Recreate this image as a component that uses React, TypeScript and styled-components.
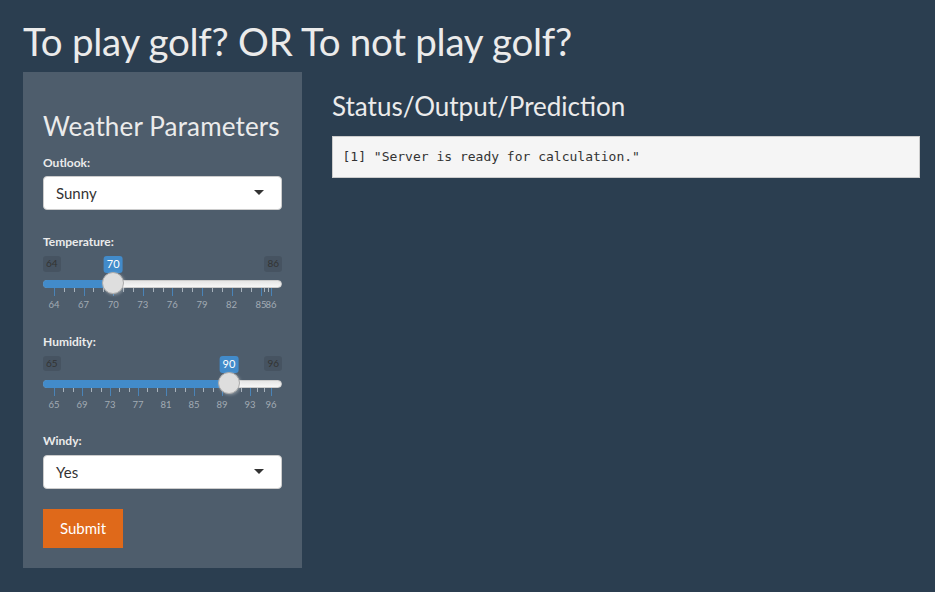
import React from "react";
import styled, { createGlobalStyle } from "styled-components";

const GlobalStyle = createGlobalStyle`
  html, body { margin: 0; padding: 0; }
  body {
    background: #2b3e50;
    color: #ebebeb;
    font-family: Lato, "Open Sans", "Liberation Sans", sans-serif;
    font-size: 15px;
    line-height: 1.42857143;
  }
  * { box-sizing: border-box; }
`;

const Page = styled.div`
  padding: 0 15px 20px 23px;
`;

const Title = styled.h2`
  margin: 20px 0 9px;
  font-size: 38.5px;
  font-weight: 400;
  line-height: 43px;
  letter-spacing: -0.28px;
  color: #ebebeb;
`;

const Row = styled.div`
  display: flex;
  align-items: flex-start;
  gap: 30px;
`;

const Well = styled.form`
  flex: 0 0 279px;
  width: 279px;
  padding: 19px;
  border: 1px solid transparent;
  background: #4e5d6c;
`;

const Main = styled.div`
  flex: 1 1 auto;
  min-width: 0;
`;

const SectionTitle = styled.h3`
  margin: 20px 0 10px;
  font-size: 26px;
  font-weight: 400;
  line-height: 1.1;
  letter-spacing: 0.15px;
  color: #ebebeb;
`;

const FormGroup = styled.div`
  margin-bottom: 15px;
  font-size: 15px;
  line-height: 1.42857143;
`;

const Label = styled.label`
  display: inline-block;
  max-width: 100%;
  margin-bottom: 5px;
  font-size: 12px;
  font-weight: 700;
  color: #ebebeb;
`;

const SelectControl = styled.div`
  position: relative;
`;

const SelectInput = styled.div`
  display: inline-block;
  position: relative;
  overflow: hidden;
  width: 100%;
  height: 34px;
  padding: 6px 12px;
  border: 1px solid #cccccc;
  border-radius: 4px;
  background: #ffffff;
  color: #333333;
  font-size: 15px;
  line-height: 20px;
  vertical-align: baseline;
`;

const Caret = styled.span`
  position: absolute;
  top: 50%;
  right: 17px;
  margin-top: -3px;
  width: 0;
  height: 0;
  border-style: solid;
  border-width: 5px 5px 0 5px;
  border-color: #333333 transparent transparent transparent;
`;

const Irs = styled.div`
  position: relative;
  height: 59.5px;
  user-select: none;
`;

const IrsLine = styled.span`
  position: absolute;
  top: 25px;
  left: 0;
  width: 100%;
  height: 8px;
  border: 1px solid #cccccc;
  border-radius: 8px;
  background: linear-gradient(to bottom, #dddddd -50%, #ffffff 150%);
`;

const IrsBar = styled.span`
  position: absolute;
  top: 25px;
  left: 0;
  height: 8px;
  border-radius: 8px 0 0 8px;
  background: #428bca;
`;

const IrsHandle = styled.span`
  position: absolute;
  top: 17px;
  width: 22px;
  height: 22px;
  margin-left: -11px;
  border: 1px solid #ababab;
  border-radius: 50%;
  background: #dedede;
  box-shadow: 1px 1px 3px rgba(255, 255, 255, 0.3);
`;

const IrsEdge = styled.span<{ $side: "left" | "right" }>`
  position: absolute;
  top: 1px;
  ${(p) => (p.$side === "left" ? "left: 0;" : "right: 0;")}
  padding: 1px 3px;
  border-radius: 3px;
  background: rgba(0, 0, 0, 0.1);
  color: #333333;
  font-size: 10px;
  line-height: 1.333;
`;

const IrsSingle = styled.span`
  position: absolute;
  top: 1px;
  transform: translateX(-50%);
  padding: 1px 3px;
  border-radius: 3px;
  background: #428bca;
  color: #ffffff;
  font-size: 11px;
  line-height: 1.333;
  white-space: nowrap;
`;

const IrsTick = styled.span<{ $big: boolean }>`
  position: absolute;
  top: 33px;
  width: 1px;
  height: ${(p) => (p.$big ? "8px" : "4px")};
  background: ${(p) => (p.$big ? "#4a84b8" : "#a7b1bb")};
`;

const IrsGridText = styled.span`
  position: absolute;
  top: 45px;
  transform: translateX(-50%);
  color: #a2abb4;
  font-size: 9.5px;
  line-height: 9px;
  white-space: nowrap;
`;

const SubmitButton = styled.button`
  display: inline-block;
  padding: 8px 16px;
  border: 1px solid transparent;
  border-radius: 0;
  background: #df691a;
  color: #ffffff;
  font-family: Lato, "Open Sans", "Liberation Sans", sans-serif;
  font-size: 15px;
  line-height: 1.42857143;
  cursor: pointer;
`;

const OutputTitle = styled.h3`
  margin: 20px 0 10px;
  font-size: 26px;
  font-weight: 400;
  line-height: 1.1;
  color: #ebebeb;
`;

const Pre = styled.pre`
  margin: 15px 0 10px;
  padding: 9.5px;
  border: 1px solid #cccccc;
  border-radius: 0;
  background: #f5f5f5;
  color: #333333;
  font-family: "DejaVu Sans Mono", "Liberation Mono", monospace;
  font-size: 13px;
  line-height: 21px;
  white-space: pre-wrap;
`;

type SliderProps = {
  min: number;
  max: number;
  value: number;
  ticks: number[];
};

const pos = (v: number, min: number, max: number) =>
  `calc(11px + ${(v - min) / (max - min)} * (100% - 22px))`;

function RangeSlider({ min, max, value, ticks }: SliderProps) {
  const smalls: number[] = [];
  for (let i = 0; i < ticks.length - 1; i++) {
    const a = ticks[i];
    const b = ticks[i + 1];
    smalls.push(a + (b - a) / 3, a + (2 * (b - a)) / 3);
  }
  return (
    <Irs>
      <IrsLine />
      <IrsBar style={{ width: pos(value, min, max) }} />
      <IrsEdge $side="left">{min}</IrsEdge>
      <IrsEdge $side="right">{max}</IrsEdge>
      <IrsSingle style={{ left: pos(value, min, max) }}>{value}</IrsSingle>
      {ticks.map((t) => (
        <IrsTick key={`b${t}`} $big style={{ left: pos(t, min, max) }} />
      ))}
      {smalls.map((t, i) => (
        <IrsTick key={`s${i}`} $big={false} style={{ left: pos(t, min, max) }} />
      ))}
      {ticks.map((t) => (
        <IrsGridText key={`t${t}`} style={{ left: pos(t, min, max) }}>
          {t}
        </IrsGridText>
      ))}
      <IrsHandle style={{ left: pos(value, min, max) }} />
    </Irs>
  );
}

function SelectBox({ value }: { value: string }) {
  return (
    <SelectControl>
      <SelectInput>
        {value}
        <Caret />
      </SelectInput>
    </SelectControl>
  );
}

export default function App() {
  return (
    <>
      <GlobalStyle />
      <Page>
        <Title>To play golf? OR To not play golf?</Title>
        <Row>
          <Well onSubmit={(e) => e.preventDefault()}>
            <SectionTitle>Weather Parameters</SectionTitle>
            <FormGroup>
              <Label>Outlook:</Label>
              <SelectBox value="Sunny" />
            </FormGroup>
            <FormGroup>
              <Label>Temperature:</Label>
              <RangeSlider
                min={64}
                max={86}
                value={70}
                ticks={[64, 67, 70, 73, 76, 79, 82, 85, 86]}
              />
            </FormGroup>
            <FormGroup>
              <Label>Humidity:</Label>
              <RangeSlider
                min={65}
                max={96}
                value={90}
                ticks={[65, 69, 73, 77, 81, 85, 89, 93, 96]}
              />
            </FormGroup>
            <FormGroup>
              <Label>Windy:</Label>
              <SelectBox value="Yes" />
            </FormGroup>
            <SubmitButton type="submit">Submit</SubmitButton>
          </Well>
          <Main>
            <OutputTitle>Status/Output/Prediction</OutputTitle>
            <Pre>[1] "Server is ready for calculation."</Pre>
          </Main>
        </Row>
      </Page>
    </>
  );
}
